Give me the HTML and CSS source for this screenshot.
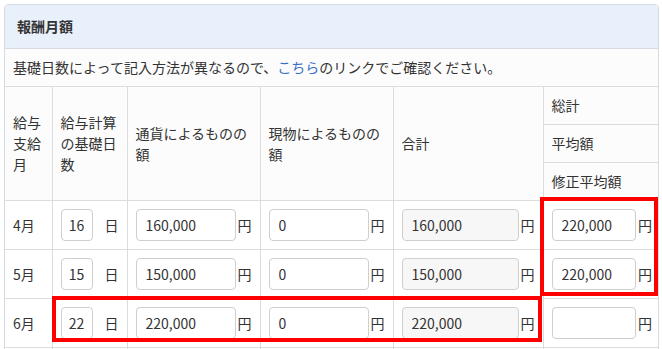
FILE: index.html
```html
<!DOCTYPE html>
<html lang="ja">
<head>
    <meta charset="UTF-8">
    <meta name="viewport" content="width=device-width, initial-scale=1.0">
    <title>報酬月額</title>
    <link rel="stylesheet" href="styles.css">
</head>
<body>
    <div class="card">
        <div class="card-header">報酬月額</div>
        <div class="card-note">基礎日数によって記入方法が異なるので、<a href="#">こちら</a>のリンクでご確認ください。</div>
        <table class="pay-table">
            <colgroup>
                <col class="c-month">
                <col class="c-days">
                <col class="c-money">
                <col class="c-money">
                <col class="c-total">
                <col class="c-sum">
            </colgroup>
            <tr class="head-row">
                <th rowspan="3">給与支給月</th>
                <th rowspan="3">給与計算の基礎日数</th>
                <th rowspan="3">通貨によるものの額</th>
                <th rowspan="3">現物によるものの額</th>
                <th rowspan="3">合計</th>
                <th>総計</th>
            </tr>
            <tr class="head-row"><th>平均額</th></tr>
            <tr class="head-row"><th>修正平均額</th></tr>

            <tr class="data-row">
                <td>4月</td>
                <td><div class="field"><input class="days" type="text" value="16"><span class="unit-day">日</span></div></td>
                <td><div class="field"><input type="text" value="160,000"><span class="unit">円</span></div></td>
                <td><div class="field"><input type="text" value="0"><span class="unit">円</span></div></td>
                <td><div class="field"><input class="readonly" type="text" value="160,000" readonly><span class="unit">円</span></div></td>
                <td><div class="field"><input type="text" value="220,000"><span class="unit">円</span></div></td>
            </tr>
            <tr class="data-row">
                <td>5月</td>
                <td><div class="field"><input class="days" type="text" value="15"><span class="unit-day">日</span></div></td>
                <td><div class="field"><input type="text" value="150,000"><span class="unit">円</span></div></td>
                <td><div class="field"><input type="text" value="0"><span class="unit">円</span></div></td>
                <td><div class="field"><input class="readonly" type="text" value="150,000" readonly><span class="unit">円</span></div></td>
                <td><div class="field"><input type="text" value="220,000"><span class="unit">円</span></div></td>
            </tr>
            <tr class="data-row">
                <td>6月</td>
                <td><div class="field"><input class="days" type="text" value="22"><span class="unit-day">日</span></div></td>
                <td><div class="field"><input type="text" value="220,000"><span class="unit">円</span></div></td>
                <td><div class="field"><input type="text" value="0"><span class="unit">円</span></div></td>
                <td><div class="field"><input class="readonly" type="text" value="220,000" readonly><span class="unit">円</span></div></td>
                <td><div class="field"><input type="text" value=""><span class="unit">円</span></div></td>
            </tr>
            <tr class="data-row">
                <td></td>
                <td></td>
                <td></td>
                <td></td>
                <td></td>
                <td></td>
            </tr>
        </table>

        <!-- 注目箇所の赤枠 -->
        <div class="mark mark-average"></div>
        <div class="mark mark-june"></div>
    </div>
</body>
</html>
```

FILE: styles.css
```css
body {
    margin: 4px 3px 4px 4px;
    font-family: "Noto Sans CJK JP", "Noto Sans", sans-serif;
    font-size: 14px;
    line-height: 21px;
    color: #333;
    background-color: #fff;
}
.card {
    position: relative;
    border: 1px solid #d6dbe2;
    border-radius: 4px;
    overflow: hidden;
}
.card-header {
    padding: 11px 12px;
    background-color: #e8f0fb;
    border-bottom: 1px solid #d6dbe2;
    font-weight: bold;
}
.card-note {
    padding: 8px 8px;
    background-color: #fcfcfc;
    border-bottom: 1px solid #dcdcdc;
}
.card-note a {
    color: #3a70c8;
    text-decoration: none;
}
.pay-table {
    width: 100%;
    table-layout: fixed;
    border-collapse: collapse;
    border-style: hidden;
}
.c-month { width: 47px; }
.c-days { width: 75px; }
.c-money { width: 133px; }
.c-total { width: 150px; }
.c-sum { width: 115px; }
.pay-table th,
.pay-table td {
    border: 1px solid #dcdcdc;
    padding: 8px;
    text-align: left;
    font-weight: normal;
    vertical-align: middle;
}
.pay-table td:last-child {
    padding-right: 6px;
}
.head-row th {
    background-color: #fcfcfc;
    height: 21px;
}
.data-row td {
    height: 32px;
}
.field {
    display: flex;
    align-items: center;
}
.field input {
    flex: 1;
    min-width: 0;
    height: 32px;
    box-sizing: border-box;
    padding: 0 9px;
    border: 1px solid #cfcfcf;
    border-radius: 4px;
    font-family: inherit;
    font-size: 14px;
    color: #333;
    background-color: #fff;
}
.field input.days {
    flex: none;
    width: 32px;
    padding: 0;
    text-align: center;
}
.field input.readonly {
    background-color: #f7f7f7;
}
.unit {
    width: 14px;
    margin-left: 2px;
}
.unit-day {
    margin-left: 12px;
}
.mark {
    position: absolute;
    border: 4px solid #ff0000;
    box-sizing: border-box;
}
.mark-average {
    left: 535px;
    top: 192px;
    width: 118px;
    height: 99px;
}
.mark-june {
    left: 47px;
    top: 291px;
    width: 490px;
    height: 46px;
}
```
